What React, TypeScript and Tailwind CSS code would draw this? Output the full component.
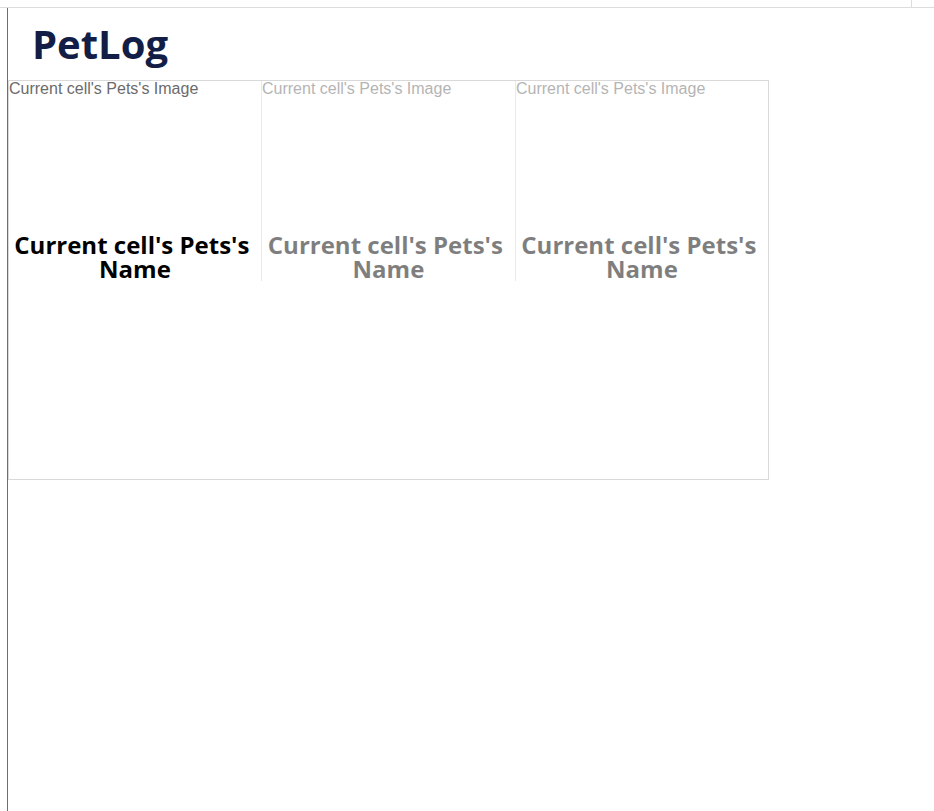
const cells = [0, 1, 2];

const PetCell = ({ dim, first }: { dim: boolean; first: boolean }) => (
  <div
    className={`flex h-[200px] flex-col ${first ? '' : 'border-l border-[#d6d6d6]'} ${dim ? 'opacity-50' : ''}`}
  >
    <div className="flex-1 font-['Liberation_Sans',Arial,sans-serif] text-[16px] leading-[16px] text-[#6b6b6b]">
      Current cell's Pets's Image
    </div>
    <h3 className="text-center font-['Open_Sans',sans-serif] text-[24px] font-bold leading-[24px] text-black">
      Current cell's Pets's{'\u00a0'}
      <br />
      Name
    </h3>
  </div>
);

export default function App() {
  return (
    <div className="flex h-[811px] w-[934px] flex-col bg-white">
      {/* editor frame top strip */}
      <div className="flex h-[8px] shrink-0 border-b border-[#dcdcdc]">
        <div className="w-[912px] border-r border-[#dcdcdc]" />
      </div>

      <div className="ml-[7px] flex-1 border-l border-[#2f7bd0]">
        <div className="h-[72px] pl-[24px] pt-[12px]">
          <h1 className="font-['Open_Sans',sans-serif] text-[40px] font-bold leading-[48px] text-[#131e47]">
            PetLog
          </h1>
        </div>

        <div className="h-[400px] w-[761px] border border-[#d9d9d9]">
          <div className="grid grid-cols-[252px_254px_253px]">
            {cells.map((i) => (
              <PetCell key={i} dim={i > 0} first={i === 0} />
            ))}
          </div>
        </div>
      </div>
    </div>
  );
}
